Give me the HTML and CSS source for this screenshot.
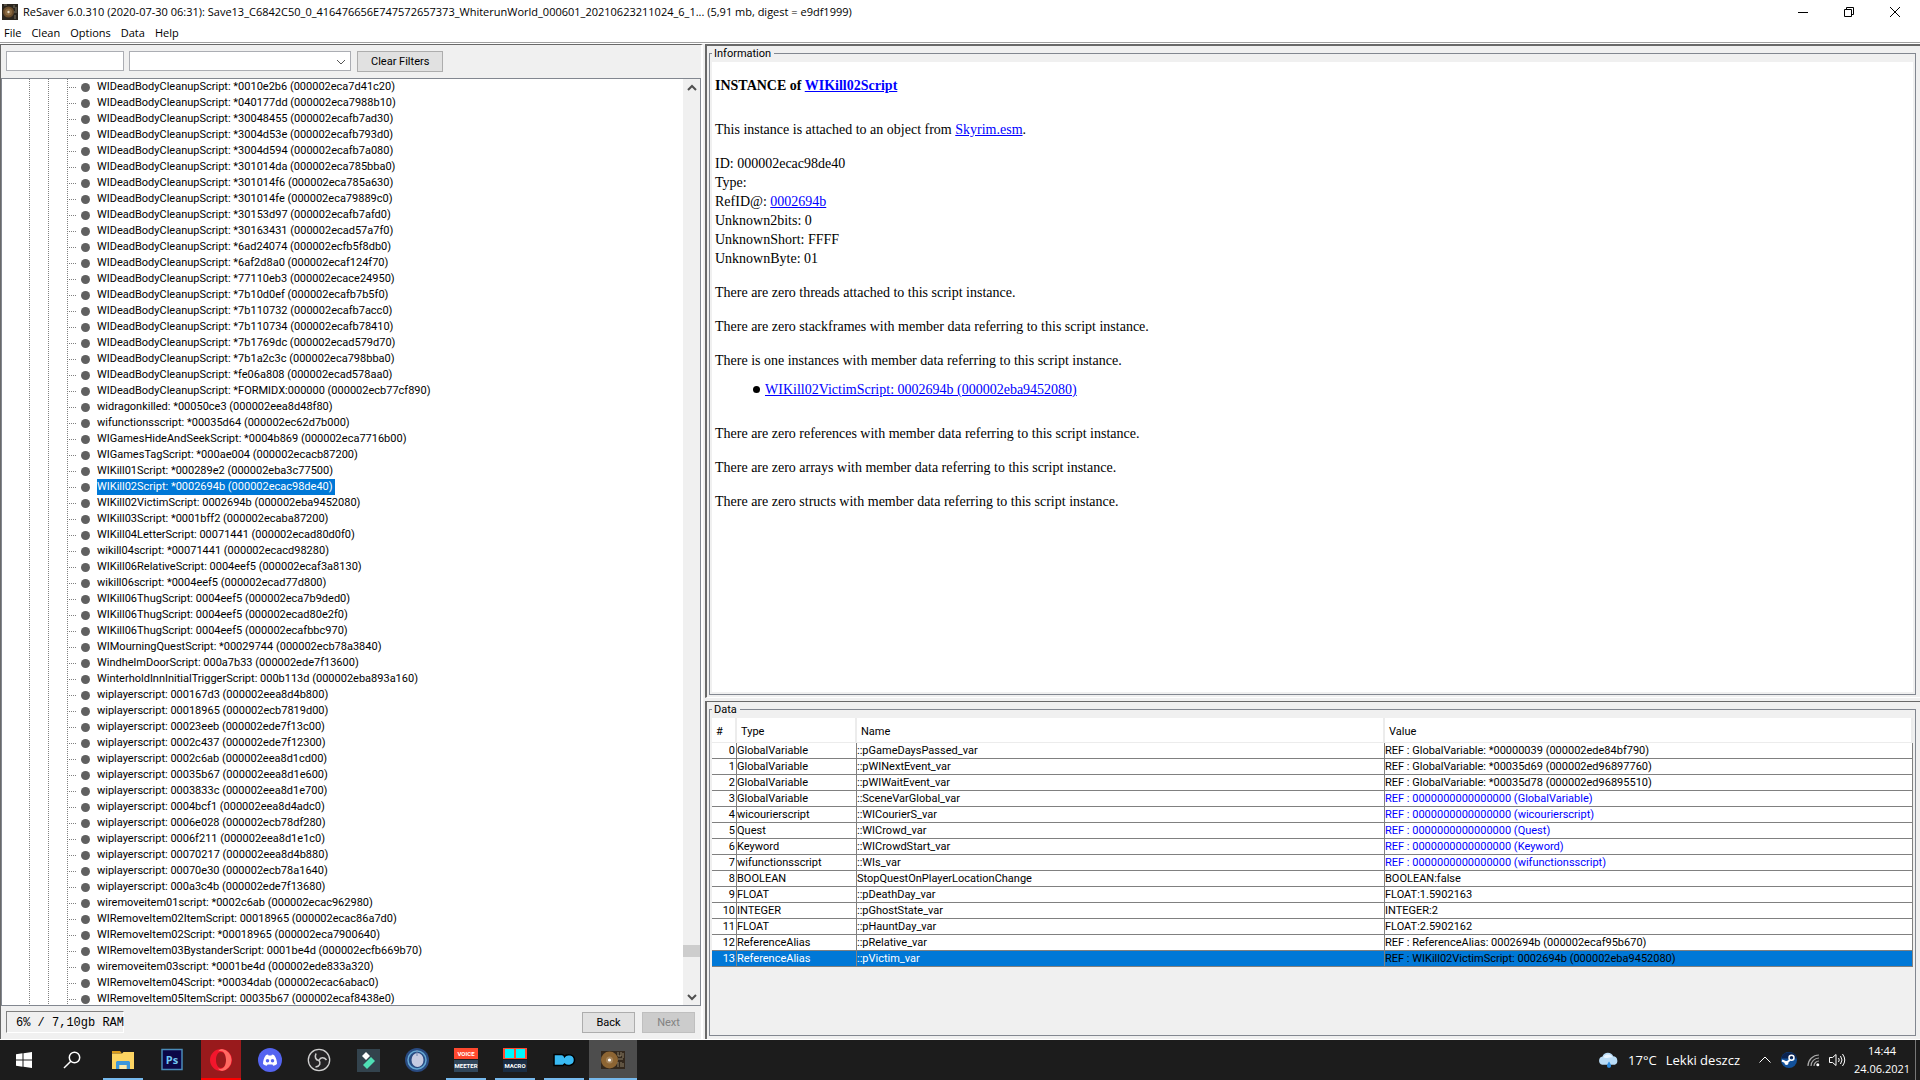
FILE: index.html
```html
<!DOCTYPE html>
<html lang="en">
<head>
<meta charset="utf-8">
<title>ReSaver 6.0.310</title>
<link rel="stylesheet" href="styles.css">
</head>
<body>
<header class="titlebar">
  <svg class="app-icon" viewBox="0 0 16 16" aria-hidden="true">
    <rect width="16" height="16" fill="#2a251e"/><circle cx="6.500" cy="8" r="5.500" fill="#6b4d2b"/><circle cx="6.500" cy="8" r="3.500" fill="#8a6a42"/><circle cx="6.500" cy="8" r="1.200" fill="#e5d9c4"/><path d="M12 1v3M14 3v4M12 8h3M13 11v4M2 1h3" stroke="#7d7665"/>
  </svg>
  <h1 class="title">ReSaver 6.0.310 (2020-07-30 06:31): Save13_C6842C50_0_416476656E747572657373_WhiterunWorld_000601_20210623211024_6_1... (5,91 mb, digest = e9df1999)</h1>
  <div class="window-buttons">
    <button type="button" aria-label="Minimize"><svg viewBox="0 0 12 12"><path d="M1 6.500h10"/></svg></button>
    <button type="button" aria-label="Restore"><svg viewBox="0 0 12 12"><path d="M1.500 3.500h7v7h-7zM3.500 3.500v-2h7v7h-2"/></svg></button>
    <button type="button" aria-label="Close"><svg viewBox="0 0 12 12"><path d="M1 1l10 10M11 1L1 11"/></svg></button>
  </div>
</header>
<nav class="menubar">
  <button type="button">File</button><button type="button">Clean</button><button type="button">Options</button><button type="button">Data</button><button type="button">Help</button>
</nav>
<main class="workspace">
  <section class="browser">
    <div class="filters">
      <input class="filter-text" type="text" aria-label="Filter">
      <div class="combo">
        <select aria-label="Plugin"><option></option></select>
        <svg viewBox="0 0 10 10" aria-hidden="true"><path d="M1 3l4 4 4-4"/></svg>
      </div>
      <button class="push" type="button">Clear Filters</button>
    </div>
    <div class="tree-box">
      <ul class="tree">
        <li><span>WIDeadBodyCleanupScript: *0010e2b6 (000002eca7d41c20)</span></li>
        <li><span>WIDeadBodyCleanupScript: *040177dd (000002eca7988b10)</span></li>
        <li><span>WIDeadBodyCleanupScript: *30048455 (000002ecafb7ad30)</span></li>
        <li><span>WIDeadBodyCleanupScript: *3004d53e (000002ecafb793d0)</span></li>
        <li><span>WIDeadBodyCleanupScript: *3004d594 (000002ecafb7a080)</span></li>
        <li><span>WIDeadBodyCleanupScript: *301014da (000002eca785bba0)</span></li>
        <li><span>WIDeadBodyCleanupScript: *301014f6 (000002eca785a630)</span></li>
        <li><span>WIDeadBodyCleanupScript: *301014fe (000002eca79889c0)</span></li>
        <li><span>WIDeadBodyCleanupScript: *30153d97 (000002ecafb7afd0)</span></li>
        <li><span>WIDeadBodyCleanupScript: *30163431 (000002ecad57a7f0)</span></li>
        <li><span>WIDeadBodyCleanupScript: *6ad24074 (000002ecfb5f8db0)</span></li>
        <li><span>WIDeadBodyCleanupScript: *6af2d8a0 (000002ecaf124f70)</span></li>
        <li><span>WIDeadBodyCleanupScript: *77110eb3 (000002ecace24950)</span></li>
        <li><span>WIDeadBodyCleanupScript: *7b10d0ef (000002ecafb7b5f0)</span></li>
        <li><span>WIDeadBodyCleanupScript: *7b110732 (000002ecafb7acc0)</span></li>
        <li><span>WIDeadBodyCleanupScript: *7b110734 (000002ecafb78410)</span></li>
        <li><span>WIDeadBodyCleanupScript: *7b1769dc (000002ecad579d70)</span></li>
        <li><span>WIDeadBodyCleanupScript: *7b1a2c3c (000002eca798bba0)</span></li>
        <li><span>WIDeadBodyCleanupScript: *fe06a808 (000002ecad578aa0)</span></li>
        <li><span>WIDeadBodyCleanupScript: *FORMIDX:000000 (000002ecb77cf890)</span></li>
        <li><span>widragonkilled: *00050ce3 (000002eea8d48f80)</span></li>
        <li><span>wifunctionsscript: *00035d64 (000002ec62d7b000)</span></li>
        <li><span>WIGamesHideAndSeekScript: *0004b869 (000002eca7716b00)</span></li>
        <li><span>WIGamesTagScript: *000ae004 (000002ecacb87200)</span></li>
        <li><span>WIKill01Script: *000289e2 (000002eba3c77500)</span></li>
        <li><span class="selected">WIKill02Script: *0002694b (000002ecac98de40)</span></li>
        <li><span>WIKill02VictimScript: 0002694b (000002eba9452080)</span></li>
        <li><span>WIKill03Script: *0001bff2 (000002ecaba87200)</span></li>
        <li><span>WIKill04LetterScript: 00071441 (000002ecad80d0f0)</span></li>
        <li><span>wikill04script: *00071441 (000002ecacd98280)</span></li>
        <li><span>WIKill06RelativeScript: 0004eef5 (000002ecaf3a8130)</span></li>
        <li><span>wikill06script: *0004eef5 (000002ecad77d800)</span></li>
        <li><span>WIKill06ThugScript: 0004eef5 (000002eca7b9ded0)</span></li>
        <li><span>WIKill06ThugScript: 0004eef5 (000002ecad80e2f0)</span></li>
        <li><span>WIKill06ThugScript: 0004eef5 (000002ecafbbc970)</span></li>
        <li><span>WIMourningQuestScript: *00029744 (000002ecb78a3840)</span></li>
        <li><span>WindhelmDoorScript: 000a7b33 (000002ede7f13600)</span></li>
        <li><span>WinterholdInnInitialTriggerScript: 000b113d (000002eba893a160)</span></li>
        <li><span>wiplayerscript: 000167d3 (000002eea8d4b800)</span></li>
        <li><span>wiplayerscript: 00018965 (000002ecb7819d00)</span></li>
        <li><span>wiplayerscript: 00023eeb (000002ede7f13c00)</span></li>
        <li><span>wiplayerscript: 0002c437 (000002ede7f12300)</span></li>
        <li><span>wiplayerscript: 0002c6ab (000002eea8d1cd00)</span></li>
        <li><span>wiplayerscript: 00035b67 (000002eea8d1e600)</span></li>
        <li><span>wiplayerscript: 0003833c (000002eea8d1e700)</span></li>
        <li><span>wiplayerscript: 0004bcf1 (000002eea8d4adc0)</span></li>
        <li><span>wiplayerscript: 0006e028 (000002ecb78df280)</span></li>
        <li><span>wiplayerscript: 0006f211 (000002eea8d1e1c0)</span></li>
        <li><span>wiplayerscript: 00070217 (000002eea8d4b880)</span></li>
        <li><span>wiplayerscript: 00070e30 (000002ecb78a1640)</span></li>
        <li><span>wiplayerscript: 000a3c4b (000002ede7f13680)</span></li>
        <li><span>wiremoveitem01script: *0002c6ab (000002ecac962980)</span></li>
        <li><span>WIRemoveItem02ItemScript: 00018965 (000002ecac86a7d0)</span></li>
        <li><span>WIRemoveItem02Script: *00018965 (000002eca7900640)</span></li>
        <li><span>WIRemoveItem03BystanderScript: 0001be4d (000002ecfb669b70)</span></li>
        <li><span>wiremoveitem03script: *0001be4d (000002ede833a320)</span></li>
        <li><span>WIRemoveItem04Script: *00034dab (000002ecac6abac0)</span></li>
        <li><span>WIRemoveItem05ItemScript: 00035b67 (000002ecaf8438e0)</span></li>
      </ul>
      <div class="scrollbar">
        <button type="button" aria-label="Scroll up"><svg viewBox="0 0 10 10"><path d="M1 7l4-4 4 4"/></svg></button>
        <div class="track"><div class="thumb"></div></div>
        <button type="button" aria-label="Scroll down"><svg viewBox="0 0 10 10"><path d="M1 3l4 4 4-4"/></svg></button>
      </div>
    </div>
    <div class="status">
      <output class="memory">6% / 7,10gb RAM</output>
      <div class="pager">
        <button class="push" type="button">Back</button>
        <button class="push" type="button" disabled>Next</button>
      </div>
    </div>
  </section>
  <div class="details">
    <section class="pane info-pane">
      <div class="group">
        <h2>Information</h2>
        <article class="info">
          <h3>INSTANCE of <a href="#script">WIKill02Script</a></h3>
          <p>This instance is attached to an object from <a href="#plugin">Skyrim.esm</a>.</p>
          <p>ID: 000002ecac98de40<br>Type:<br>RefID@: <a href="#ref">0002694b</a><br>Unknown2bits: 0<br>UnknownShort: FFFF<br>UnknownByte: 01</p>
          <p>There are zero threads attached to this script instance.</p>
          <p>There are zero stackframes with member data referring to this script instance.</p>
          <p>There is one instances with member data referring to this script instance.</p>
          <ul><li><a href="#victim">WIKill02VictimScript: 0002694b (000002eba9452080)</a></li></ul>
          <p>There are zero references with member data referring to this script instance.</p>
          <p>There are zero arrays with member data referring to this script instance.</p>
          <p>There are zero structs with member data referring to this script instance.</p>
        </article>
      </div>
    </section>
    <section class="pane data-pane">
      <div class="group">
        <h2>Data</h2>
        <div class="table-box">
        <table>
          <colgroup><col class="col-index"><col class="col-type"><col><col></colgroup>
          <thead><tr><th>#</th><th>Type</th><th>Name</th><th>Value</th></tr></thead>
          <tbody>
            <tr><td>0</td><td>GlobalVariable</td><td>::pGameDaysPassed_var</td><td>REF : GlobalVariable: *00000039 (000002ede84bf790)</td></tr>
            <tr><td>1</td><td>GlobalVariable</td><td>::pWINextEvent_var</td><td>REF : GlobalVariable: *00035d69 (000002ed96897760)</td></tr>
            <tr><td>2</td><td>GlobalVariable</td><td>::pWIWaitEvent_var</td><td>REF : GlobalVariable: *00035d78 (000002ed96895510)</td></tr>
            <tr class="null"><td>3</td><td>GlobalVariable</td><td>::SceneVarGlobal_var</td><td>REF : 0000000000000000 (GlobalVariable)</td></tr>
            <tr class="null"><td>4</td><td>wicourierscript</td><td>::WICourierS_var</td><td>REF : 0000000000000000 (wicourierscript)</td></tr>
            <tr class="null"><td>5</td><td>Quest</td><td>::WICrowd_var</td><td>REF : 0000000000000000 (Quest)</td></tr>
            <tr class="null"><td>6</td><td>Keyword</td><td>::WICrowdStart_var</td><td>REF : 0000000000000000 (Keyword)</td></tr>
            <tr class="null"><td>7</td><td>wifunctionsscript</td><td>::WIs_var</td><td>REF : 0000000000000000 (wifunctionsscript)</td></tr>
            <tr><td>8</td><td>BOOLEAN</td><td>StopQuestOnPlayerLocationChange</td><td>BOOLEAN:false</td></tr>
            <tr><td>9</td><td>FLOAT</td><td>::pDeathDay_var</td><td>FLOAT:1.5902163</td></tr>
            <tr><td>10</td><td>INTEGER</td><td>::pGhostState_var</td><td>INTEGER:2</td></tr>
            <tr><td>11</td><td>FLOAT</td><td>::pHauntDay_var</td><td>FLOAT:2.5902162</td></tr>
            <tr><td>12</td><td>ReferenceAlias</td><td>::pRelative_var</td><td>REF : ReferenceAlias: 0002694b (000002ecaf95b670)</td></tr>
            <tr class="current"><td>13</td><td>ReferenceAlias</td><td>::pVictim_var</td><td>REF : WIKill02VictimScript: 0002694b (000002eba9452080)</td></tr>
          </tbody>
        </table>
        </div>
      </div>
    </section>
  </div>
</main>
<footer class="taskbar">
  <div class="apps">
    <button class="system" type="button" aria-label="Start"><svg viewBox="0 0 24 24"><path fill="#fff" d="M4 6.200l6.500-.9v6.200H4zM11.500 5.200L20 4v7.500h-8.500zM4 12.500h6.500v6.200L4 17.800zM11.500 12.500H20V20l-8.500-1.200z"/></svg></button>
    <button class="system" type="button" aria-label="Search"><svg viewBox="0 0 24 24"><g fill="none" stroke="#fff" stroke-width="1.500"><circle cx="14.500" cy="9.500" r="5.200"/><path d="M10.800 13.200L4 20"/></g></svg></button>
    <button class="open" type="button" aria-label="File Explorer"><svg viewBox="0 0 24 24"><path fill="#d99a1b" d="M1 3h8l2 2.500H1z"/><path fill="#fcd462" d="M1 5.500h10L12.500 4H23v17H1z"/><path fill="#3b97dc" d="M5 21v-7l1-1h12l1 1v7h-3.500v-4h-7v4z"/><path fill="#fbe9a8" d="M8.500 17h7v4h-7z"/></svg></button>
    <button type="button" aria-label="Photoshop"><svg viewBox="0 0 24 24"><rect x="2" y="1.500" width="20" height="20" fill="#0c0747" stroke="#4a8bb8" stroke-width="1.500"/><text class="ps" x="12" y="16" text-anchor="middle">Ps</text></svg></button>
    <button class="opera" type="button" aria-label="Opera"><svg viewBox="0 0 24 24"><path fill="#f3162c" fill-rule="evenodd" d="M12 1a11 11 0 0 0 0 22 11 11 0 0 0 0-22zm0 3c3 0 5 3.500 5 8s-2 8-5 8-5-3.500-5-8 2-8 5-8z"/><path fill="#ff6a62" d="M13 1.100A11 11 0 0 1 13 22.900c-1.600 0-3-1-4-2.300 5 1.500 8-2 8-8.600S14 1.900 9 3.400c1-1.300 2.400-2.200 4-2.300z"/></svg></button>
    <button type="button" aria-label="Discord"><svg viewBox="0 0 24 24"><circle cx="12" cy="12" r="12" fill="#5464f0"/><path fill="#fff" fill-rule="evenodd" d="M8 7l2-.5.6 1.100h2.800L14 6.500l2 .5c2 2.500 3 5.500 3 9-1.200 1-2.500 1.500-3.800 1.700l-.8-1.300h-4.800l-.8 1.300C7.500 17.500 6.200 17 5 16c0-3.500 1-6.500 3-9zm1.500 4a1.700 1.700 0 1 0 0 3.500 1.700 1.700 0 0 0 0-3.500zm5 0a1.700 1.700 0 1 0 0 3.500 1.700 1.700 0 0 0 0-3.500z"/></svg></button>
    <button type="button" aria-label="OBS Studio"><svg viewBox="0 0 24 24"><circle cx="12" cy="12" r="10.700" fill="#242325" stroke="#d0d0d0" stroke-width="1.300"/><g fill="none" stroke="#ccc" stroke-width="1.600"><path d="M12 12.500C8.500 12 7.500 9 9 5.500"/><path d="M12 12.500c1.500-3.500 5-3.500 7.500-.5"/><path d="M12 12.500c2 2.500 1 6-3.500 6.500"/></g></svg></button>
    <button type="button" aria-label="Filmora"><svg viewBox="0 0 24 24"><rect x="1" y="1" width="23" height="23" fill="#33434d"/><path fill="#fff" d="M10 4l4 4-4 4-4-4z"/><path fill="#4fe0b5" d="M15 9l4 4-8 8-4-4z"/></svg></button>
    <button type="button" aria-label="Monitor"><svg viewBox="0 0 24 24"><circle cx="12" cy="12" r="12" fill="#294b82"/><circle cx="12" cy="12" r="9" fill="none" stroke="#65a7d2" stroke-width="1.500"/><ellipse cx="12.500" cy="12" rx="6" ry="7" fill="#c6cbe2"/><path d="M12 2v6" stroke="#7186af"/></svg></button>
    <button class="open" type="button" aria-label="Voicemeeter"><svg viewBox="0 0 24 24"><path fill="#ff492f" d="M0 0h24v11H0z"/><path fill="#30465a" d="M0 12h24v12H0z"/><text class="tiny" x="12" y="8" text-anchor="middle">VOICE</text><text class="tiny" x="12" y="20" text-anchor="middle">MEETER</text></svg></button>
    <button class="open" type="button" aria-label="Macro Buttons"><svg viewBox="0 0 24 24"><path fill="#ff492f" d="M0 0h24v11H0z"/><path fill="#1a2d43" d="M0 12h24v12H0z"/><path fill="#00f6ff" d="M2 1h9v9H2zM13 1h9v9h-9z"/><text class="tiny" x="12" y="20" text-anchor="middle">MACRO</text></svg></button>
    <button class="open" type="button" aria-label="Editor"><svg viewBox="0 0 24 24"><path fill="#39baf3" stroke="#000" stroke-width="1.500" d="M2 6.500h8q2 .5 2.500 2C14.500 5.500 22.500 6 22.500 12S15 18.500 12.500 16L11 17.500H2z"/></svg></button>
    <button class="open active" type="button" aria-label="ReSaver"><svg viewBox="0 0 24 24"><rect y="3" width="24" height="18" fill="#33281d"/><circle cx="8.500" cy="12" r="8.500" fill="#8d6533"/><circle cx="8.500" cy="12" r="3.500" fill="#a4845b"/><circle cx="8.500" cy="12" r="1.600" fill="#fff"/><path fill="none" stroke="#8e8069" d="M17 4v4h3V4m2 1v5m-5 1h5m-5 3v5m3-5v5m2-4v4"/></svg></button>
  </div>
  <div class="tray">
    <button class="weather" type="button">
      <svg viewBox="0 0 20 16" aria-hidden="true"><path fill="#b9dcf7" d="M4 12a4 4 0 0 1 .3-7.800A5.500 5.500 0 0 1 14.500 4 4.200 4.200 0 0 1 16 12z"/><path fill="#e9f5ff" d="M5 5a5 5 0 0 1 9 0c-3-1-6 2-9 0z"/><path fill="#2e8de0" d="M10.500 9c3 4 2 6 0 6s-3-2 0-6z"/></svg>
      <span>17°C</span><span>Lekki deszcz</span>
    </button>
    <button type="button" aria-label="Show hidden icons"><svg viewBox="0 0 16 16"><path class="line" d="M2.500 10.500L8 5l5.500 5.500"/></svg></button>
    <button type="button" aria-label="Steam"><svg viewBox="0 0 16 16"><circle cx="8" cy="8" r="8" fill="#12519a"/><path fill="#0b2350" d="M.2 6.500A8 8 0 0 1 15.800 6.500z"/><circle cx="10.500" cy="5.800" r="2.500" fill="none" stroke="#fff" stroke-width="1.500"/><path d="M1 8.500l4.500 2L9 8" fill="none" stroke="#fff" stroke-width="2"/><circle cx="5.500" cy="11" r="2" fill="#fff"/></svg></button>
    <button type="button" aria-label="Network"><svg viewBox="0 0 16 16"><g fill="none" stroke="#aaa" stroke-width="1.200"><path d="M3 14A11 11 0 0 1 14 3"/><path d="M6 14a8 8 0 0 1 8-8"/><path d="M9 14a5 5 0 0 1 5-5"/></g><circle cx="12.800" cy="12.800" r="1.500" fill="#fff"/></svg></button>
    <button class="volume" type="button" aria-label="Volume"><svg viewBox="0 0 18 16"><path class="line" d="M1.500 5.500h3L8 2.500v11l-3.500-3h-3zM10.500 6q1.500 2 0 4M12.500 4q3 4 0 8M14.500 2q4.500 6 0 12"/></svg></button>
    <time class="clock"><span>14:44</span><span>24.06.2021</span></time>
  </div>
</footer>
</body>
</html>
```
FILE: styles.css
```css
* { box-sizing: border-box; }

body {
  margin: 0;
  height: 100vh;
  display: flex;
  flex-direction: column;
  background: #fff;
  color: #000;
  font: 11px/16px Roboto, "Liberation Sans", sans-serif;
}

h1, h2, h3, p, ul { margin: 0; padding: 0; font: inherit; }
button { font: inherit; color: inherit; border: 0; padding: 0; background: none; }
svg { display: block; }

/* Title and menu */
.titlebar {
  display: flex;
  align-items: center;
  height: 23px;
  padding: 0 2px;
  flex: none;
}
.app-icon { width: 16px; height: 16px; margin-right: 5px; }
.title { flex: 1; font-family: "Open Sans", sans-serif; white-space: nowrap; overflow: hidden; }
.window-buttons { display: flex; }
.window-buttons button { width: 46px; height: 20px; display: grid; place-items: center; }
.window-buttons svg { width: 12px; height: 12px; fill: none; stroke: #000; }
.menubar {
  display: flex;
  gap: 10px;
  height: 20px;
  padding-left: 4px;
  border-bottom: 1px solid #a0a0a0;
  font-family: "Open Sans", sans-serif;
  flex: none;
}

/* Main split */
.workspace {
  flex: 1;
  min-height: 0;
  margin-top: 1px;
  display: grid;
  grid-template-columns: 703fr 1215fr;
  grid-template-rows: minmax(0, 1fr);
  gap: 2px;
  background: #f0f0f0;
  border-bottom: 1px solid #fff;
}
.browser {
  display: flex;
  flex-direction: column;
  min-width: 0;
  border-top: 1px solid #696969;
  border-left: 1px solid #696969;
  border-right: 2px solid #fff;
}
.filters { display: flex; gap: 5px; padding: 6px 5px; }
.filter-text, .combo select {
  height: 20px;
  margin: 0;
  border: 1px solid #abadb3;
  border-radius: 0;
  background: #fff;
  font: inherit;
}
.filter-text { width: 118px; }
.combo { display: grid; width: 222px; margin-right: 1px; }
.combo select, .combo svg { grid-area: 1 / 1; }
.combo select { appearance: none; }
.combo svg {
  width: 10px;
  height: 10px;
  place-self: center end;
  margin-right: 5px;
  fill: none;
  stroke: #555;
  pointer-events: none;
}
.push {
  height: 21px;
  min-width: 53px;
  padding: 0 13px;
  border: 1px solid #adadad;
  background: #e1e1e1;
}
.push:disabled { background: #ccc; border-color: #bfbfbf; color: #838383; }

/* Script tree */
.tree-box {
  flex: 1;
  min-height: 0;
  display: flex;
  border: 1px solid #828790;
  background: #fff;
}
.tree {
  flex: 1;
  overflow: hidden;
  list-style: none;
  white-space: nowrap;
  background:
    repeating-linear-gradient(#808080 0 1px, transparent 1px 2px) 27px 0 / 1px 100% no-repeat,
    repeating-linear-gradient(#808080 0 1px, transparent 1px 2px) 46px 0 / 1px 100% no-repeat,
    repeating-linear-gradient(#808080 0 1px, transparent 1px 2px) 65px 0 / 1px 100% no-repeat;
}
.tree li {
  display: flex;
  align-items: center;
  height: 16px;
  padding-left: 65px;
}
.tree li::before {
  content: "";
  width: 10px;
  height: 1px;
  background: repeating-linear-gradient(90deg, #808080 0 1px, transparent 1px 2px);
}
.tree li::after {
  content: "";
  order: 1;
  width: 9px;
  height: 9px;
  margin: 0 7px 0 4px;
  border-radius: 50%;
  background: #606060;
}
.tree span { order: 2; padding: 0 2px 0 0; }
.tree .selected { background: #0078d7; color: #fff; }
.scrollbar { width: 17px; display: flex; flex-direction: column; background: #f0f0f0; }
.scrollbar button { height: 17px; display: grid; place-items: center; }
.scrollbar svg { width: 10px; height: 10px; fill: none; stroke: #505050; stroke-width: 2; }
.track { flex: 1; display: flex; flex-direction: column; justify-content: flex-end; padding-bottom: 31px; }
.thumb { height: 12px; background: #cdcdcd; }

.status { display: flex; justify-content: space-between; padding: 5px 6px 6px 5px; }
.memory {
  width: 118px;
  height: 22px;
  padding-left: 9px;
  border: 1px solid;
  border-color: #808080 #fff #fff #808080;
  font: 12px/22px "Liberation Mono", monospace;
  white-space: nowrap;
}
.pager { display: flex; gap: 7px; padding-top: 1px; }

/* Details */
.details { display: grid; grid-template-rows: 654fr 338fr; gap: 3px; min-width: 0; }
.pane {
  display: flex;
  min-height: 0;
  padding: 7px 4px 2px 2px;
  border-left: 2px solid #696969;
}
.info-pane { border-top: 2px solid #696969; border-bottom: 1px solid #fff; }
.data-pane { border-top: 1px solid #696969; padding-bottom: 3px; }
.group { flex: 1; min-width: 0; display: flex; flex-direction: column; border: 1px solid #828790; }
.group h2 {
  align-self: flex-start;
  margin: -8px 0 0 2px;
  padding: 0 3px 0 2px;
  background: #f0f0f0;
}
.info {
  flex: 1;
  margin: 0 2px 2px;
  padding: 14px 3px;
  background: #fff;
  font: 14px/19px "Liberation Serif", serif;
}
.info h3 { margin-bottom: 25px; font-weight: bold; }
.info p { margin-bottom: 15px; }
.info ul { margin: -5px 0 25px; padding-left: 38px; list-style: none; }
.info li { display: flex; align-items: center; gap: 5px; }
.info li::before { content: ""; width: 7px; height: 7px; border-radius: 50%; background: #000; }
.info a { color: #00f; }

.table-box { margin: 0 2px; }
table { width: 100%; table-layout: fixed; border-spacing: 0; background: #fff; }
.col-index { width: 25px; }
.col-type { width: 120px; }
th {
  height: 25px;
  padding: 3px 4px 0;
  border-right: 2px solid #ececec;
  border-bottom: 1px solid #ececec;
  font-weight: normal;
  text-align: left;
}
td {
  height: 16px;
  padding: 0 1px 0 0;
  border-right: 1px solid #808080;
  border-bottom: 1px solid #808080;
  line-height: 15px;
  white-space: nowrap;
}
td:first-child { text-align: right; }
.null td:last-child { color: #00f; }
.current { background: #0078d7; color: #fff; }
.current td:last-child { color: #000; }

/* Taskbar */
.taskbar {
  flex: none;
  height: 40px;
  display: flex;
  justify-content: space-between;
  background: #1c1c1c;
  color: #fff;
}
.apps { display: flex; }
.apps button {
  width: 40px;
  height: 40px;
  margin-right: 9px;
  display: grid;
  place-items: center;
}
.apps .system { width: 48px; margin: 0; }
.apps .system + button:not(.system) { margin-left: 7px; }
.apps svg { width: 24px; height: 24px; }
.apps .open { border-bottom: 2px solid #76b9ed; padding-top: 2px; }
.apps .opera { background: #991a1c; border-bottom: 2px solid #f00; padding-top: 2px; }
.apps .active { width: 48px; margin: 0 0 0 -4px; background: #4d4d4d; }
.ps { font: bold 11px "Open Sans", sans-serif; fill: #72c8f5; }
.tiny { font: bold 6px Roboto, sans-serif; fill: #fff; }
.tray {
  display: flex;
  align-items: center;
  margin-right: 4px;
  border-right: 1px solid #777;
}
.tray button { width: 24px; height: 40px; display: grid; place-items: center; }
.tray svg { width: 16px; height: 16px; }
.line { fill: none; stroke: #fff; stroke-width: 1; }
.tray .weather {
  display: flex;
  align-items: center;
  gap: 9px;
  width: auto;
  margin-right: 13px;
  font: 13px/20px "Open Sans", sans-serif;
}
.tray .weather svg { width: 21px; height: 17px; }
.tray .volume svg { width: 18px; }
.clock {
  width: 66px;
  display: flex;
  flex-direction: column;
  align-items: center;
  font: 11px/18px "Open Sans", sans-serif;
}
```
